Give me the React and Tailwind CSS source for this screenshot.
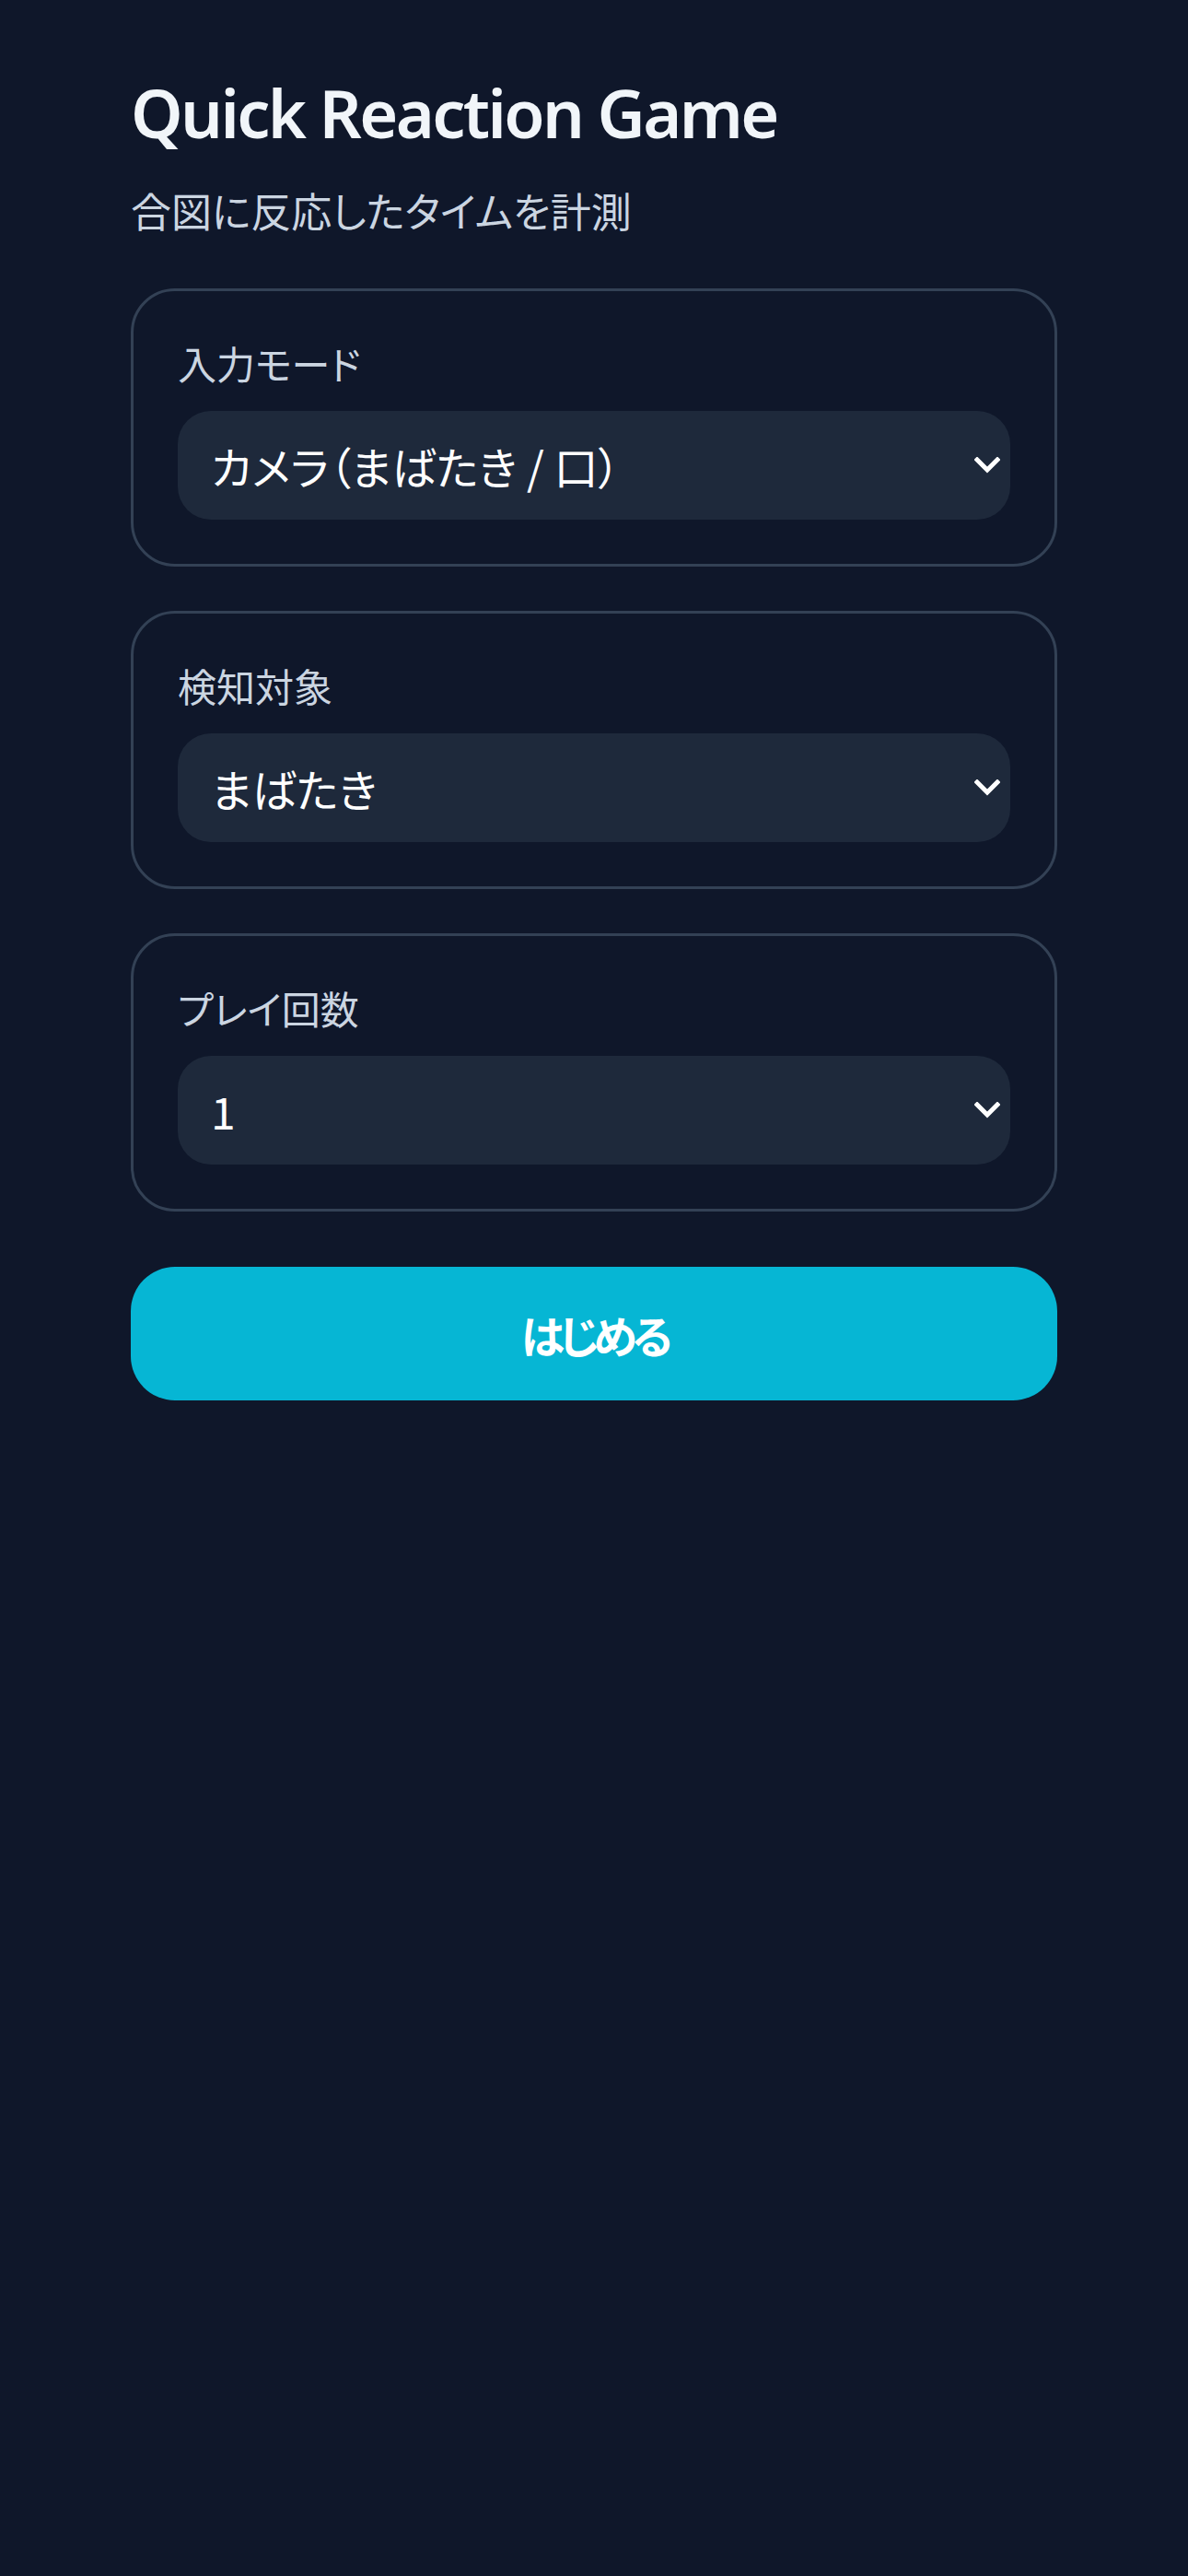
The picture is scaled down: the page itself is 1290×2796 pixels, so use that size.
import React from "react";

const jp = "font-['Noto_Sans_CJK_JP','Noto_Sans',sans-serif] [font-feature-settings:'palt']";

function Chevron() {
  return (
    <svg width="28" height="18" viewBox="0 0 28 18" className="shrink-0">
      <path d="M3 3 L14 14 L25 3" fill="none" stroke="#ffffff" strokeWidth="5" strokeLinecap="square" />
    </svg>
  );
}

function Field({ label, value }) {
  return (
    <div className="rounded-[48px] border-[3px] border-[#334155] px-[48px] pt-[48px] pb-[48px]">
      <div className={`${jp} text-[42px] leading-[60px] text-[#cbd5e1]`}>{label}</div>
      <div className="mt-[22px] flex h-[118px] items-center justify-between rounded-[36px] bg-[#1e293b] pl-[36px] pr-[11px]">
        <span className={`${jp} text-[48px] leading-[60px] text-white`}>{value}</span>
        <Chevron />
      </div>
    </div>
  );
}

export default function App() {
  return (
    <div className="min-h-[2796px] w-full bg-[#0f172a]">
      <div className="mx-auto w-[1006px] pt-[74px]">
        <h1 className="font-['Noto_Sans',sans-serif] text-[72px] font-semibold leading-[96px] tracking-[-2.6px] text-[#f1f5f9]">
          Quick Reaction Game
        </h1>
        <p className={`${jp} mt-[28px] text-[44px] leading-[60px] text-[#cbd5e1]`}>
          合図に反応したタイムを計測
        </p>
        <div className="mt-[55px] flex flex-col gap-[48px]">
          <Field label="入力モード" value="カメラ（まばたき / 口）" />
          <Field label="検知対象" value="まばたき" />
          <Field label="プレイ回数" value="1" />
        </div>
        <button className={`${jp} mt-[60px] flex h-[145px] w-full items-center justify-center rounded-[48px] bg-[#06b6d4] text-[48px] font-bold tracking-[-6px] text-white`}>
          はじめる
        </button>
      </div>
    </div>
  );
}
